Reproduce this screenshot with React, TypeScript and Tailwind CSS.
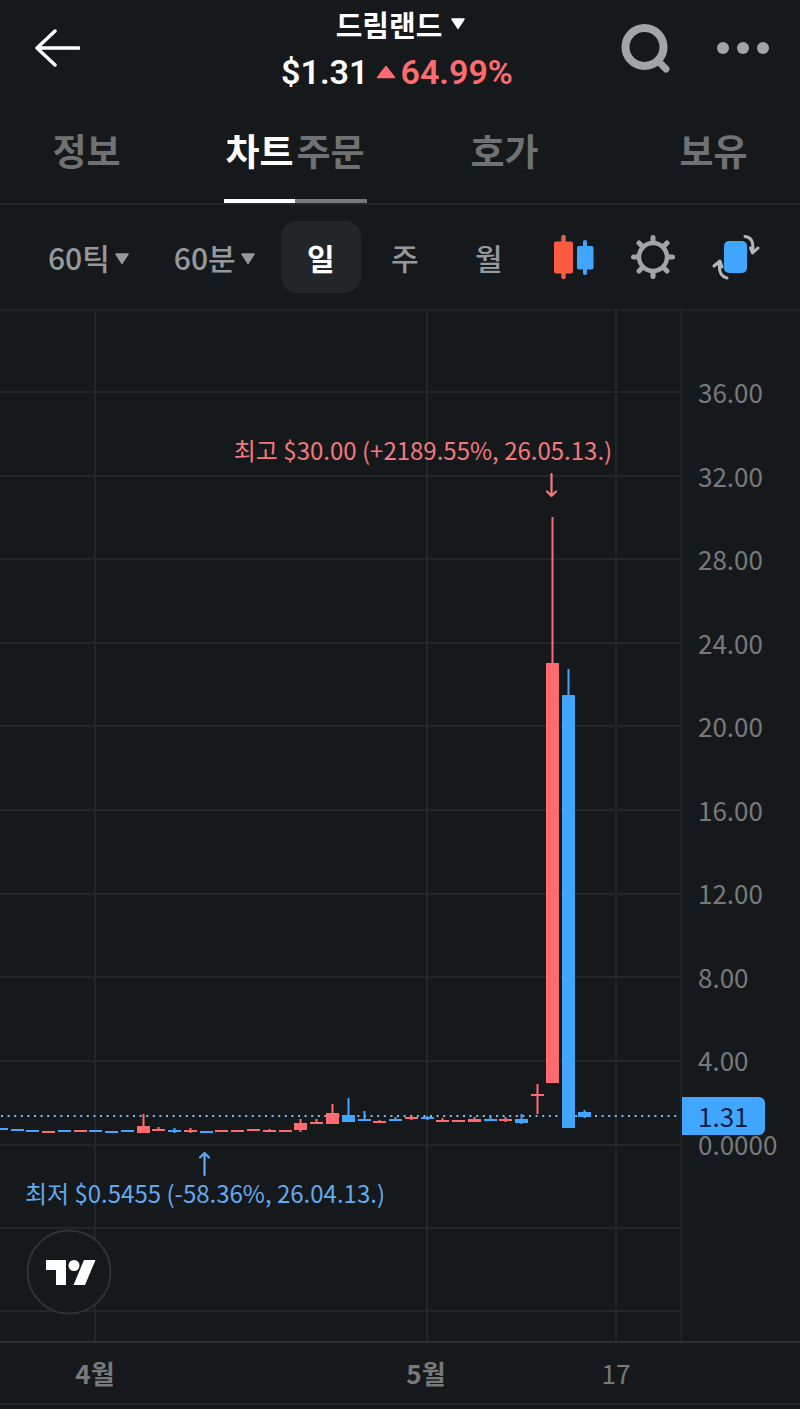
const UP = "#ff6b6f";
const DOWN = "#40a6ff";

const ticks = ["36.00", "32.00", "28.00", "24.00", "20.00", "16.00", "12.00", "8.00", "4.00", "0.0000"];

const gridY = [81, 165, 248, 332, 415, 499, 583, 666, 750, 834, 917, 1000];
const gridX = [95, 427, 616];

// [x, body top, body bottom, wick top, wick bottom, up]
const candles: [number, number, number, number, number, boolean][] = [
  [1, 817, 819, 817, 819, false],
  [17, 818, 820, 818, 820, false],
  [32, 819, 821, 819, 821, false],
  [48, 820, 822, 820, 822, true],
  [64, 819, 821, 819, 821, false],
  [80, 819, 821, 819, 821, true],
  [95, 819, 821, 819, 821, false],
  [111, 820, 822, 820, 822, false],
  [127, 819, 821, 819, 821, false],
  [143, 815, 822, 803, 822, true],
  [158, 818, 820, 816, 820, true],
  [174, 819, 821, 817, 822, false],
  [190, 819, 821, 817, 822, true],
  [206, 820, 822, 820, 822, false],
  [221, 819, 821, 819, 821, true],
  [237, 819, 821, 819, 821, true],
  [253, 818, 820, 818, 820, true],
  [269, 819, 821, 818, 821, true],
  [285, 819, 821, 819, 821, true],
  [300, 812, 819, 808, 821, true],
  [316, 811, 813, 808, 813, true],
  [332, 802, 813, 793, 813, true],
  [348, 804, 811, 787, 811, false],
  [364, 808, 810, 800, 810, false],
  [379, 810, 812, 809, 812, true],
  [395, 808, 810, 806, 810, false],
  [411, 806, 808, 805, 809, true],
  [427, 806, 808, 805, 809, false],
  [442, 809, 811, 807, 811, true],
  [458, 809, 811, 809, 811, true],
  [474, 808, 811, 806, 811, true],
  [490, 808, 810, 806, 810, false],
  [505, 808, 810, 806, 811, true],
  [521, 808, 812, 803, 813, false],
  [537, 783, 785, 773, 803, true],
  [552, 352, 772, 206, 772, true],
  [568, 384, 817, 358, 817, false],
  [584, 801, 806, 799, 807, false],
];

function Caret({ className }: { className: string }) {
  return (
    <svg viewBox="0 0 14 11" className={className} aria-hidden="true">
      <path d="M1.5 1h11L7 9.5z" fill="currentColor" stroke="currentColor" strokeWidth="1.4" strokeLinejoin="round" />
    </svg>
  );
}

function Header() {
  return (
    <header className="grid grid-cols-[1fr_auto_1fr] items-center pr-[30px] pl-8">
      <button type="button" aria-label="뒤로" className="w-12 text-white">
        <svg viewBox="0 0 48 40" className="h-10 w-12" fill="none" stroke="currentColor" strokeWidth="3.4" strokeLinecap="round" strokeLinejoin="round">
          <path d="M47 20H5M23 3 5 20l18 17" />
        </svg>
      </button>
      <div className="flex flex-col items-center">
        <button type="button" className="flex items-center gap-2 text-[29px] leading-12 font-bold text-white">
          드림랜드
          <Caret className="h-3 w-4" />
        </button>
        <p className="flex items-center gap-2 pr-2 font-[Roboto,'Noto_Sans_CJK_KR',sans-serif] text-[34px] leading-12 font-semibold text-white">
          $1.31
          <span className="flex items-center gap-1 text-[#ff6b6f]">
            <svg viewBox="0 0 20 14" className="h-3.5 w-5" aria-hidden="true">
              <path d="M10 1.5 18.5 12.5h-17z" fill="currentColor" stroke="currentColor" strokeWidth="1.5" strokeLinejoin="round" />
            </svg>
            64.99%
          </span>
        </p>
      </div>
      <div className="flex items-center justify-end gap-11 text-[#a2a5a8]">
        <button type="button" aria-label="검색">
          <svg viewBox="0 0 52 52" className="size-[52px]" fill="none" stroke="currentColor" strokeLinecap="round">
            <circle cx="24.5" cy="25" r="19" strokeWidth="8" />
            <path d="m38 39 8 8" strokeWidth="7" />
          </svg>
        </button>
        <button type="button" aria-label="더보기">
          <svg viewBox="0 0 54 14" className="h-3.5 w-[54px]" fill="currentColor">
            <circle cx="7" cy="7" r="6" />
            <circle cx="27" cy="7" r="6" />
            <circle cx="47" cy="7" r="6" />
          </svg>
        </button>
      </div>
    </header>
  );
}

function Tabs() {
  return (
    <nav className="overflow-hidden border-b-2 border-[#25282b] pt-1.5">
      <div className="-mx-[18px] grid grid-cols-4 justify-items-center text-[37px] leading-[97px] font-bold text-[#6f7173]">
        <a href="#info">정보</a>
        <div className="flex">
          <a href="#chart" className="border-b-4 border-white px-px text-white">차트</a>
          <a href="#order" className="border-b-4 border-[#77787a] px-0.5">주문</a>
        </div>
        <a href="#quote">호가</a>
        <a href="#holding">보유</a>
      </div>
    </nav>
  );
}

function Toolbar() {
  return (
    <div className="flex h-[106px] items-center justify-between border-b-2 border-[#1f2225] pr-10 pl-12 text-[30px] font-medium text-[#96999c]">
      <div className="flex gap-11">
        <button type="button" className="flex items-center gap-1">
          60틱
          <Caret className="mt-1 h-3 w-4" />
        </button>
        <button type="button" className="flex items-center gap-1">
          60분
          <Caret className="mt-1 h-3 w-4" />
        </button>
      </div>
      <div className="flex gap-1">
        <button type="button" className="h-[72px] w-20 rounded-2xl bg-[#232629] font-bold text-white">일</button>
        <button type="button" className="h-[72px] w-20">주</button>
        <button type="button" className="h-[72px] w-20">월</button>
      </div>
      <div className="flex items-center gap-9">
        <button type="button" aria-label="캔들 종류">
          <svg viewBox="0 0 40 46" className="h-[46px] w-10">
            <path d="M9.5 3v40" stroke="#e2614d" strokeWidth="4.5" strokeLinecap="round" />
            <rect x="0" y="7.5" width="19" height="32" rx="2" fill="#fb5c41" />
            <path d="M31 8v31" stroke={DOWN} strokeWidth="4" strokeLinecap="round" />
            <rect x="23" y="12" width="16.5" height="23.5" rx="2" fill={DOWN} />
          </svg>
        </button>
        <button type="button" aria-label="설정">
          <svg viewBox="0 0 46 46" className="size-[46px]" fill="none" stroke="#a2a5a8" strokeLinecap="round">
            <circle cx="23" cy="23" r="14" strokeWidth="4.4" />
            <path d="M23 3.5v4M23 38.500v4M3.5 23h4M38.500 23h4M9 9l3 3M34 34l3 3M9 37l3-3M34 12l3-3" strokeWidth="5" />
          </svg>
        </button>
        <button type="button" aria-label="화면 회전">
          <svg viewBox="0 0 48 46" className="h-[46px] w-12" fill="none" stroke="#b4b6b8" strokeWidth="3" strokeLinecap="round" strokeLinejoin="round">
            <rect x="12" y="7" width="23" height="32" rx="5" fill={DOWN} stroke="none" />
            <path d="M33 2.500c6 .5 9 5 7.500 15.500M38.500 14l2 5 5.500-5" />
            <path d="M15 44c-6-1-8.500-6-7.500-16M2 32l6-5 2 6" />
          </svg>
        </button>
      </div>
    </div>
  );
}

function Plot() {
  return (
    <svg viewBox="0 0 680 1030" className="block w-full" role="img" aria-label="드림랜드 일봉 차트">
      <g stroke="#232629" strokeWidth="2">
        {gridY.map((y) => (
          <line key={y} x1="0" x2="680" y1={y} y2={y} />
        ))}
        {gridX.map((x) => (
          <line key={x} x1={x} x2={x} y1="0" y2="1030" />
        ))}
      </g>
      <line x1="1" x2="678" y1="805" y2="805" stroke="#7fbaf0" strokeWidth="2" strokeDasharray="2 4.6" />
      {candles.map(([x, top, bottom, high, low, up]) => (
        <g key={x} fill={up ? UP : DOWN}>
          <rect x={x - 6} y={top} width="13" height={bottom - top} />
          <rect x={x - 0.5} y={high} width="2" height={low - high} />
        </g>
      ))}
      <g fontSize="24" textAnchor="middle">
        <text x="423" y="149" fill="#f4797c">최고 $30.00 (+2189.55%, 26.05.13.)</text>
        <text x="205" y="892" fill="#62aaf0">최저 $0.5455 (-58.36%, 26.04.13.)</text>
      </g>
      <g fill="none" strokeWidth="2.2" strokeLinecap="round" strokeLinejoin="round">
        <path d="M551.5 163v22M547 180.500l4.500 4.500 4.500-4.500" stroke="#f4797c" />
        <path d="M204.5 864v-22M200 846.500l4.500-4.500 4.500 4.500" stroke="#62aaf0" />
      </g>
      <circle cx="69" cy="961" r="41.5" fill="#16191c" stroke="#303336" strokeWidth="2" />
      <g fill="#fff">
        <path d="M46 949h20v25H56v-15H46z" />
        <circle cx="74" cy="954.5" r="5.5" />
        <path d="M84 949h11.500L85 974H73.500z" />
      </g>
    </svg>
  );
}

function PriceAxis() {
  return (
    <div className="relative w-[120px] border-l-2 border-[#1f2225] text-[26px]">
      <div className="absolute top-[78.2%] left-0 -translate-y-1/2 rounded-r-md bg-[#40a6ff] px-4 leading-[38px] text-[#0c1f4a]">1.31</div>
      <ul className="relative flex h-full flex-col justify-between pt-[61px] pb-[177px] pl-4 leading-10 text-[#77797b]">
        {ticks.map((t) => (
          <li key={t}>{t}</li>
        ))}
      </ul>
    </div>
  );
}

export default function App() {
  return (
    <main className="min-h-screen bg-[#16191c] font-['Noto_Sans_CJK_KR',sans-serif]">
      <Header />
      <Tabs />
      <Toolbar />
      <section className="flex border-b-2 border-[#2d3033]">
        <div className="min-w-0 flex-1">
          <Plot />
        </div>
        <PriceAxis />
      </section>
      <div className="grid grid-cols-[190fr_141fr_190fr_190fr_89fr] border-b-2 border-[#25282b] text-center text-[26px] leading-[60px] text-[#77797b]">
        <span className="font-bold">4월</span>
        <span className="col-start-3 font-bold">5월</span>
        <span>17</span>
      </div>
    </main>
  );
}
